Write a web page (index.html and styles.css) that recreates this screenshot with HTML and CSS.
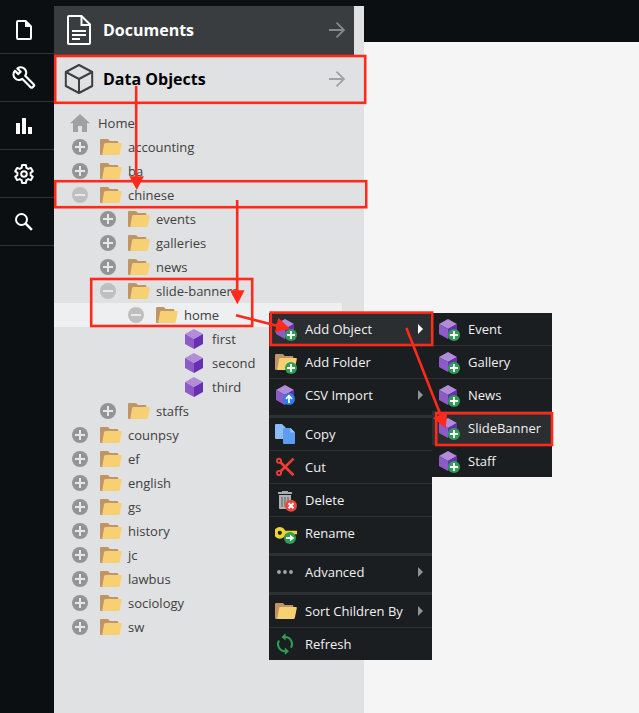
FILE: index.html
```html
<!DOCTYPE html>
<html lang="en">
<head>
<meta charset="utf-8">
<title>Data Objects</title>
<link rel="stylesheet" href="styles.css">
</head>
<body>
<svg class="defs" aria-hidden="true">
  <symbol id="plus" viewBox="0 0 16 16"><circle cx="8" cy="8" r="8" fill="#949494"/><path d="M8 3v10M3 8h10" stroke="#e6e7e9" stroke-width="2"/></symbol>
  <symbol id="minus" viewBox="0 0 16 16"><circle cx="8" cy="8" r="8" fill="#bfbfc0"/><path d="M3 8h10" stroke="#e8e9ea" stroke-width="2"/></symbol>
  <symbol id="folder" viewBox="0 0 22 16"><path d="M1.2 0H7.3Q8 0 8.5.6L9.7 2H17.3Q18.3 2 18.3 3V9L3 16H1Q0 16 0 15V1.2Q0 0 1.2 0Z" fill="#bf9566"/><path d="M5.4 4H20.9Q22 4 21.8 5.1L19.8 14.9Q19.5 16 18.4 16H3.2Q2.1 16 2.3 14.9L4.2 5Q4.4 4 5.4 4Z" fill="#f8d074"/></symbol>
  <symbol id="cube" viewBox="0 0 18 20"><path d="M9 0 18 5 9 10 0 5Z" fill="#b18cd9"/><path d="M0 5 9 10V20L0 15Z" fill="#8d5bc8"/><path d="M18 5 9 10V20L18 15Z" fill="#672fb2"/></symbol>
  <symbol id="badge-add" viewBox="0 0 12 12"><circle cx="6" cy="6" r="6" fill="#2e9e52"/><path d="M6 2v8M2 6h8" stroke="#fff" stroke-width="2"/></symbol>
  <symbol id="add-object" viewBox="0 0 22 23"><use href="#cube" x="1" y="1" width="18" height="20"/><use href="#badge-add" x="10" y="11" width="12" height="12"/></symbol>
  <symbol id="add-folder" viewBox="0 0 22 23"><use href="#folder" x="0" y="3" width="22" height="16"/><use href="#badge-add" x="10" y="11" width="12" height="12"/></symbol>
  <symbol id="import" viewBox="0 0 22 23"><use href="#cube" x="1" y="1" width="18" height="20"/><circle cx="14" cy="15" r="6" fill="#2b7de9"/><path d="M14 19v-7M11 14.8l3-3 3 3" fill="none" stroke="#fff" stroke-width="1.7"/></symbol>
  <symbol id="copy" viewBox="0 0 22 23"><path d="M1 1h6l4 4v11H1Q0 16 0 15V2Q0 1 1 1Z" fill="#8bbcf8"/><path d="M9 5h6.5L20 9.5V20q0 1-1 1H9q-1 0-1-1V6q0-1 1-1Z" fill="#5d9cf1"/><path d="M15.5 5v4.5H20Z" fill="#9dc6fb"/></symbol>
  <symbol id="cut" viewBox="0 0 22 23"><g fill="none" stroke="#ee3e34" stroke-width="1.9"><circle cx="4" cy="4.8" r="2.1"/><circle cx="4" cy="17" r="2.1"/><path d="M5.4 6.3 18.5 19.2M5.4 15.5 18.5 2.6" stroke-width="2.6"/></g></symbol>
  <symbol id="delete" viewBox="0 0 22 23"><path d="M7 2h6v2H7ZM3 3h14v2H3Z" fill="#aaa"/><path d="M4 6h12v13q0 1-1 1H5q-1 0-1-1Z" fill="#b1b1b1"/><path d="M7 8v10M10 8v10M13 8v6" stroke="#777" stroke-width="1.5"/><circle cx="16" cy="16.7" r="6" fill="#ee453d"/><path d="m13.5 14.2 5 5m0-5-5 5" stroke="#fff" stroke-width="2.1"/></symbol>
  <symbol id="rename" viewBox="0 0 22 23"><path d="M9 8.7h13.5v3.6H20v2h-4v-2H9Z" fill="#efd335"/><circle cx="4.8" cy="10.8" r="4" fill="none" stroke="#efd335" stroke-width="3.8"/><circle cx="15" cy="16" r="6" fill="#2e9e52"/><path d="M11 15h4v-2.4l4.2 3.4-4.2 3.4V17h-4Z" fill="#fff"/></symbol>
  <symbol id="more" viewBox="0 0 22 23"><g fill="#a5a6a7"><circle cx="4" cy="11" r="1.9"/><circle cx="10" cy="11" r="1.9"/><circle cx="16" cy="11" r="1.9"/></g></symbol>
  <symbol id="sort" viewBox="0 0 22 23"><use href="#folder" x="0" y="3" width="22" height="16"/></symbol>
  <symbol id="refresh" viewBox="0 0 22 23"><g fill="none" stroke="#2e9e52" stroke-width="2"><path d="M10 4a7.1 7.1 0 0 1 6 10.8M10 18.2A7.1 7.1 0 0 1 4 7.4"/></g><path d="M10.6.2V7.5L6.4 3.9ZM9.8 14.6v7.3l4.2-3.6Z" fill="#2e9e52"/></symbol>
  <symbol id="arrow" viewBox="0 0 16 16"><path d="M0 8h15M7.5.7 15 8l-7.5 7.3" fill="none" stroke="currentColor" stroke-width="1.8"/></symbol>
</svg>

<div class="app">
  <nav class="rail">
    <a class="rail-item"><svg width="24" height="24" viewBox="0 0 24 24"><path d="M6 3h7.7L19 8.3V20q0 1-1 1H6q-1 0-1-1V4q0-1 1-1Z" fill="none" stroke="#fff" stroke-width="2"/><path d="M13 3v6h6Z" fill="#fff"/></svg></a>
    <a class="rail-item"><svg width="24" height="24" viewBox="-.6 -.2 24 24"><path d="M2.4 4.6A5.4 5.4 0 0 0 9.6 12.6L18 21Q19 22 20 21L21 20Q22 19 21 18L12.6 9.6A5.4 5.4 0 0 0 4.8 2.3L8 5.5 5.7 7.9Z" fill="none" stroke="#fff" stroke-width="2.2" stroke-linejoin="round"/></svg></a>
    <a class="rail-item"><svg width="24" height="24" viewBox="0 0 24 24"><path d="M4 9h4v11H4ZM10 4h4v16h-4ZM16 13h4v7h-4Z" fill="#fff"/></svg></a>
    <a class="rail-item"><svg width="24" height="24" viewBox="0 0 24 24"><path d="M10.1 3h3.8l.5 2.8 1.9 1.1 2.6-1 1.9 3.3-2.2 1.7v2.2l2.2 1.7-1.9 3.3-2.6-1-1.9 1.1-.5 2.8h-3.8l-.5-2.8-1.9-1.1-2.6 1-1.9-3.3 2.2-1.7v-2.2L3.2 9.2l1.9-3.3 2.6 1 1.9-1.1Z" fill="none" stroke="#fff" stroke-width="2" stroke-linejoin="round"/><circle cx="12" cy="12" r="2.8" fill="none" stroke="#fff" stroke-width="2"/></svg></a>
    <a class="rail-item"><svg width="24" height="24" viewBox="0 0 24 24"><circle cx="9.5" cy="9.5" r="5.5" fill="none" stroke="#fff" stroke-width="2"/><path d="m13.7 13.7 6.2 6.2" stroke="#fff" stroke-width="2.5"/></svg></a>
  </nav>

  <aside class="panel">
    <header class="section section-dark">
      <svg class="section-icon" viewBox="0 0 30 30"><path d="M5 1H17.5L26 9.5V28q0 1-1 1H5q-1 0-1-1V2q0-1 1-1Z" fill="none" stroke="#fff" stroke-width="2"/><path d="M17.5 1v9H26M8 16h14M8 20h14M8 24h8" fill="none" stroke="#fff" stroke-width="2"/></svg>
      <span>Documents</span><svg class="section-arrow" viewBox="0 0 16 16"><use href="#arrow"/></svg>
    </header>
    <header class="section section-light">
      <svg class="section-icon" viewBox="0 0 30 30"><path d="M15 1 28.2 8V22L15 29 1.8 22V8ZM1.8 8 15 15 28.2 8M15 15v14" fill="none" stroke="#3c3f41" stroke-width="2" stroke-linejoin="round"/></svg>
      <span>Data Objects</span><svg class="section-arrow" viewBox="0 0 16 16"><use href="#arrow"/></svg>
    </header>
    <ul class="tree">
      <li class="row root"><svg class="home" viewBox="0 0 20 18"><path d="M10 0 20 9.3H17V18H12V12H8V18H3V9.3H0Z" fill="#a1a1a2"/></svg>Home</li>
      <li class="row"><svg class="toggle"><use href="#plus"/></svg><svg class="folder"><use href="#folder"/></svg>accounting</li>
      <li class="row"><svg class="toggle"><use href="#plus"/></svg><svg class="folder"><use href="#folder"/></svg>ba</li>
      <li class="row"><svg class="toggle"><use href="#minus"/></svg><svg class="folder"><use href="#folder"/></svg>chinese</li>
      <li class="row level-2"><svg class="toggle"><use href="#plus"/></svg><svg class="folder"><use href="#folder"/></svg>events</li>
      <li class="row level-2"><svg class="toggle"><use href="#plus"/></svg><svg class="folder"><use href="#folder"/></svg>galleries</li>
      <li class="row level-2"><svg class="toggle"><use href="#plus"/></svg><svg class="folder"><use href="#folder"/></svg>news</li>
      <li class="row level-2"><svg class="toggle"><use href="#minus"/></svg><svg class="folder"><use href="#folder"/></svg>slide-banners</li>
      <li class="row level-3 selected"><svg class="toggle"><use href="#minus"/></svg><svg class="folder"><use href="#folder"/></svg>home</li>
      <li class="row leaf"><svg class="cube"><use href="#cube"/></svg>first</li>
      <li class="row leaf"><svg class="cube"><use href="#cube"/></svg>second</li>
      <li class="row leaf"><svg class="cube"><use href="#cube"/></svg>third</li>
      <li class="row level-2"><svg class="toggle"><use href="#plus"/></svg><svg class="folder"><use href="#folder"/></svg>staffs</li>
      <li class="row"><svg class="toggle"><use href="#plus"/></svg><svg class="folder"><use href="#folder"/></svg>counpsy</li>
      <li class="row"><svg class="toggle"><use href="#plus"/></svg><svg class="folder"><use href="#folder"/></svg>ef</li>
      <li class="row"><svg class="toggle"><use href="#plus"/></svg><svg class="folder"><use href="#folder"/></svg>english</li>
      <li class="row"><svg class="toggle"><use href="#plus"/></svg><svg class="folder"><use href="#folder"/></svg>gs</li>
      <li class="row"><svg class="toggle"><use href="#plus"/></svg><svg class="folder"><use href="#folder"/></svg>history</li>
      <li class="row"><svg class="toggle"><use href="#plus"/></svg><svg class="folder"><use href="#folder"/></svg>jc</li>
      <li class="row"><svg class="toggle"><use href="#plus"/></svg><svg class="folder"><use href="#folder"/></svg>lawbus</li>
      <li class="row"><svg class="toggle"><use href="#plus"/></svg><svg class="folder"><use href="#folder"/></svg>sociology</li>
      <li class="row"><svg class="toggle"><use href="#plus"/></svg><svg class="folder"><use href="#folder"/></svg>sw</li>
    </ul>
  </aside>
  <main class="workspace"></main>
</div>

<div class="menus">
  <ul class="menu menu-main">
    <li class="item active has-sub"><svg class="icon"><use href="#add-object"/></svg>Add Object</li>
    <li class="item"><svg class="icon"><use href="#add-folder"/></svg>Add Folder</li>
    <li class="item has-sub"><svg class="icon"><use href="#import"/></svg>CSV Import</li>
    <li class="separator"></li>
    <li class="item"><svg class="icon"><use href="#copy"/></svg>Copy</li>
    <li class="item"><svg class="icon"><use href="#cut"/></svg>Cut</li>
    <li class="item"><svg class="icon"><use href="#delete"/></svg>Delete</li>
    <li class="item"><svg class="icon"><use href="#rename"/></svg>Rename</li>
    <li class="separator"></li>
    <li class="item has-sub"><svg class="icon"><use href="#more"/></svg>Advanced</li>
    <li class="separator"></li>
    <li class="item has-sub"><svg class="icon"><use href="#sort"/></svg>Sort Children By</li>
    <li class="item"><svg class="icon"><use href="#refresh"/></svg>Refresh</li>
  </ul>
  <ul class="menu menu-sub">
    <li class="item"><svg class="icon"><use href="#add-object"/></svg>Event</li>
    <li class="item"><svg class="icon"><use href="#add-object"/></svg>Gallery</li>
    <li class="item"><svg class="icon"><use href="#add-object"/></svg>News</li>
    <li class="item active"><svg class="icon"><use href="#add-object"/></svg>SlideBanner</li>
    <li class="item"><svg class="icon"><use href="#add-object"/></svg>Staff</li>
  </ul>
</div>

<svg class="annotations" width="639" height="713" viewBox="0 0 639 713">
  <g fill="none" stroke="#ff2a1c" stroke-width="2.6">
    <rect x="55.2" y="56" width="310" height="46.8"/>
    <rect x="55.2" y="181.2" width="311" height="26"/>
    <rect x="91.2" y="279" width="161" height="47"/>
    <rect x="270.8" y="312.6" width="161.4" height="32.4"/>
    <rect x="436.2" y="413.2" width="115.8" height="31.8"/>
    <path d="M136.2 86V178M237.2 200V292M236 315.2 278 326M406.4 328 441 416"/>
  </g>
  <path d="M129.3 176.2h14.6L136.8 190ZM230 290.2h14.6L237.4 304.2ZM278.3 317.8 290 328.8 274.8 332.4ZM433 418 447.2 412 445.8 428Z" fill="#ff2a1c"/>
</svg>
</body>
</html>
```

FILE: styles.css
```css
* { box-sizing: border-box; }
body {
  margin: 0;
  height: 713px;
  overflow: hidden;
  position: relative;
  background: #0b0f12;
  font: 13px "Open Sans", "Noto Sans", sans-serif;
}
ul { list-style: none; margin: 0; padding: 0; }
svg { display: block; flex: none; }
.defs { position: absolute; width: 0; height: 0; }
.app { display: flex; height: 713px; padding-top: 6px; }
.rail { width: 54px; }
.rail-item {
  height: 48px;
  display: flex;
  align-items: center;
  justify-content: center;
  padding-right: 6px;
  border-bottom: 1px solid #303437;
}
.panel { width: 310px; background: #e0e1e3; color: #404040; }
.section {
  height: 49px;
  width: 300px;
  display: flex;
  align-items: center;
  padding: 0 9px 1px 10px;
  font-size: 16px;
  font-weight: 700;
}
.section-icon { width: 30px; height: 30px; margin-right: 9px; }
.section-arrow { width: 16px; height: 16px; margin-left: auto; color: #a1a1a2; }
.section-dark { background: #3a3d3f; color: #fff; }
.section-dark .section-arrow { color: #86898a; }
.section-light { color: #000; }
.tree { padding-top: 7px; }
.row {
  display: flex;
  align-items: center;
  height: 24px;
  width: 288px;
  padding-left: 18px;
}
.root { padding-left: 16px; }
.level-2 { padding-left: 46px; }
.level-3 { padding-left: 74px; }
.leaf { padding-left: 131px; }
.selected { background: #eeeff1; }
.home { width: 20px; height: 18px; margin-right: 8px; }
.toggle { width: 16px; height: 16px; margin-right: 12px; }
.folder { width: 22px; height: 16px; margin-right: 6px; }
.cube { width: 18px; height: 20px; margin-right: 9px; }
.workspace { flex: 1; margin-top: 36px; background: #f5f5f5; }
.menus {
  position: absolute;
  left: 269px;
  top: 313px;
  display: flex;
  align-items: flex-start;
}
.menu { background: #1b1e20; color: #f1f1f1; }
.menu-main { width: 163px; }
.menu-sub { width: 120px; }
.item {
  height: 32px;
  display: flex;
  align-items: center;
  padding: 0 9px 0 6px;
}
.item + .item { height: 33px; border-top: 1px solid #2e3133; }
.icon { width: 22px; height: 23px; margin: 0 8px -1px 0; }
.active { background: #2b2e30; }
.has-sub::after {
  content: "";
  margin-left: auto;
  border: 5px solid transparent;
  border-left-color: #929394;
  border-right-width: 0;
}
.active.has-sub::after { border-left-color: #fff; }
.separator { height: 3px; margin-top: 4px; background: #2e3133; }
.annotations { position: absolute; left: 0; top: 0; }
```
